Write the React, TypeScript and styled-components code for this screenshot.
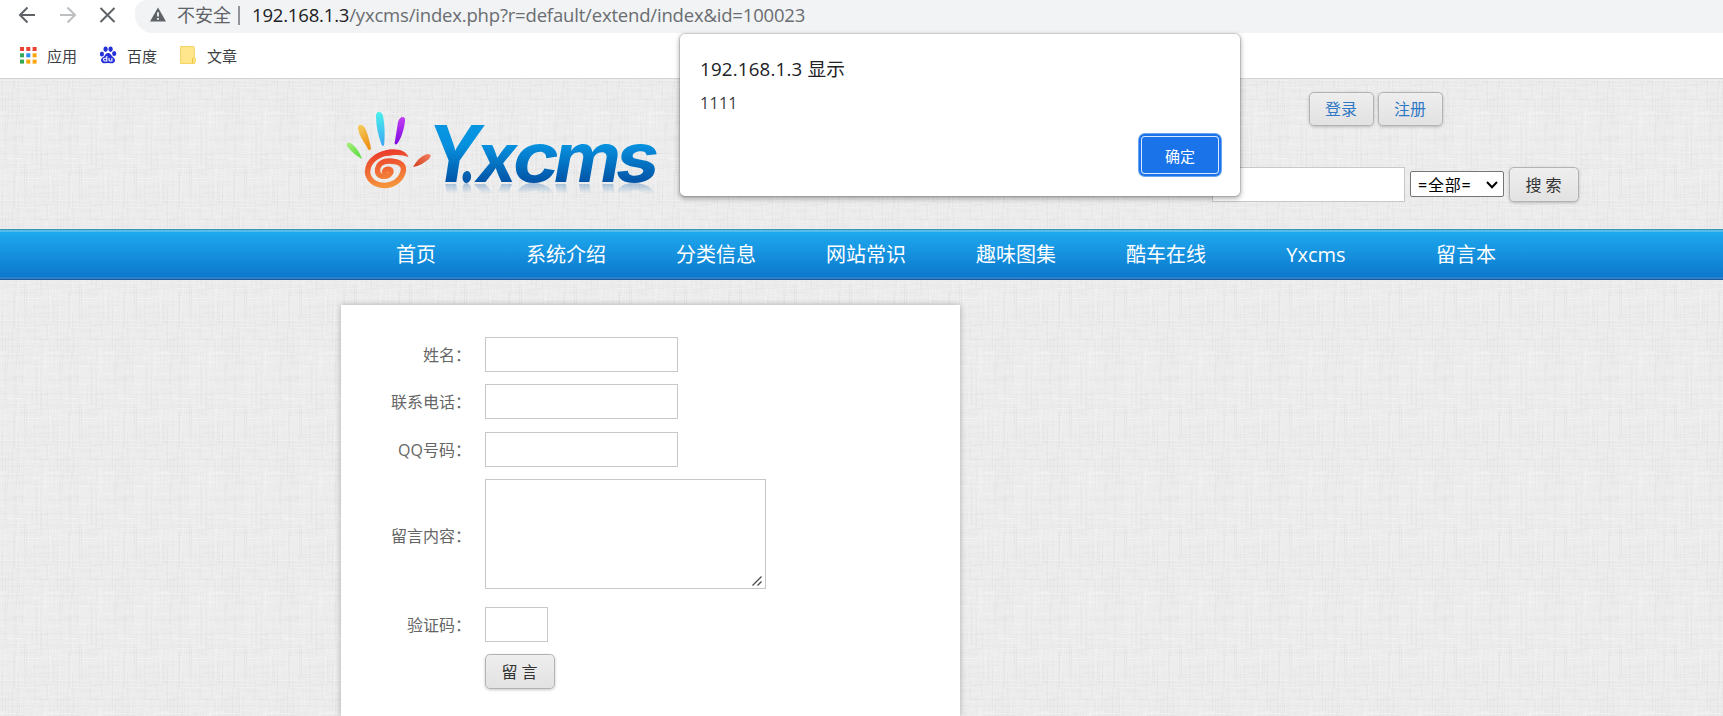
import React from "react";
import styled, { createGlobalStyle } from "styled-components";

const latin = `"Open Sans", "Noto Sans CJK SC", sans-serif`;

const svgUrl = (svg: string) => `url("data:image/svg+xml,${encodeURIComponent(svg).replace(/'/g, "%27")}")`;

/* Linen texture: short faint threads scattered over a 55x120 tile. */
const linenTile = (() => {
  let seed = 41;
  const rand = () => {
    seed = (seed * 16807) % 2147483647;
    return seed / 2147483647;
  };
  const threads: string[] = [];
  const thread = (x: number, y: number, w: number, h: number, tone: string, alpha: number) => {
    const rect = (px: number, py: number) =>
      `<rect x='${px.toFixed(0)}' y='${py.toFixed(0)}' width='${w.toFixed(0)}' height='${h.toFixed(0)}' fill='${tone}' fill-opacity='${alpha.toFixed(3)}'/>`;
    threads.push(rect(x, y));
    if (x + w > 55) threads.push(rect(x - 55, y));
    if (y + h > 120) threads.push(rect(x, y - 120));
  };
  for (let i = 0; i < 170; i++) {
    const light = rand() > 0.5;
    thread(rand() * 55, rand() * 120, 8 + rand() * 26, 1, light ? "white" : "black", light ? 0.08 + rand() * 0.12 : 0.005 + rand() * 0.012);
  }
  for (let i = 0; i < 120; i++) {
    const light = rand() > 0.5;
    thread(rand() * 55, rand() * 120, 1, 12 + rand() * 34, light ? "white" : "black", light ? 0.06 + rand() * 0.1 : 0.005 + rand() * 0.013);
  }
  return svgUrl(
    `<svg xmlns='http://www.w3.org/2000/svg' width='55' height='120'><rect width='55' height='120' fill='rgb(236,236,236)'/>${threads.join("")}</svg>`
  );
})();

const chevron = svgUrl(
  `<svg xmlns='http://www.w3.org/2000/svg' width='12' height='8'><path d='M1 1L6 6.2L11 1' fill='none' stroke='black' stroke-width='2'/></svg>`
);

const resizeGrip = svgUrl(
  `<svg xmlns='http://www.w3.org/2000/svg' width='10' height='10'><path d='M0.5 9.5L9.5 0.5M5.5 9.5L9.5 5.5' fill='none' stroke='rgb(80,80,80)' stroke-width='1.4'/></svg>`
);

const GlobalStyle = createGlobalStyle`
  * { box-sizing: border-box; }
  body { margin: 0; font-family: ${latin}; overflow: hidden; }
  button, input, textarea, select { font-family: inherit; margin: 0; }
`;

const Window = styled.div`
  position: relative;
  display: flex;
  flex-direction: column;
  width: 1723px;
  height: 716px;
  overflow: hidden;
  background: #fff;
`;

const AddressBar = styled.div`
  display: flex;
  height: 33px;
  padding-left: 18px;
`;

const NavIcons = styled.div`
  display: flex;
  align-items: center;
  gap: 22.5px;
  width: 117px;
  height: 30px;
`;

const Omnibox = styled.div`
  display: flex;
  flex: 1;
  align-items: center;
  padding: 0 0 4px 15px;
  background: #f1f3f4;
  border-radius: 12px 0 0 18px;
  color: #5f6368;
  font-size: 18px;
  line-height: 26px;
  white-space: nowrap;
`;

const Security = styled.span`
  margin-left: 11px;
  width: 61px;
`;

const Divider = styled.span`
  width: 2px;
  height: 19px;
  margin: 2px 12px 0 0;
  background: #909499;
`;

const Url = styled.span`
  font-size: 18.5px;
  letter-spacing: -0.18px;
  color: #6a6d71;
`;

const Host = styled.span`
  color: #202124;
`;

const Bookmarks = styled.div`
  display: flex;
  align-items: center;
  height: 46px;
  padding: 0 0 1px 18px;
  border-bottom: 1px solid #d3d4d5;
`;

const Bookmark = styled.div`
  display: flex;
  align-items: center;
  gap: 9px;
  width: 80px;
  color: #3c4043;
  font-size: 15px;
  line-height: 20px;
`;

const BookmarkName = styled.span`
  padding-top: 2px;
`;

const Page = styled.div`
  display: flex;
  flex: 1;
  flex-direction: column;
  background-color: #ebebeb;
  background-image: ${linenTile};
`;

const Header = styled.header`
  display: flex;
  justify-content: space-between;
  height: 150px;
  padding: 13px 144px 0 341px;
`;

const HeaderTools = styled.div`
  display: flex;
  flex-direction: column;
  align-items: flex-start;
  gap: 41px;
`;

const Account = styled.div`
  display: flex;
  gap: 4px;
  margin-left: 97px;
`;

const Search = styled.div`
  display: flex;
  align-items: center;
  gap: 5px;
`;

const GreyButton = styled.button<{ $w: number; $h?: number; $link?: boolean }>`
  width: ${(p) => p.$w}px;
  height: ${(p) => p.$h ?? 35}px;
  padding: 0 1px 0 0;
  border: 1px solid #b2b2b2;
  border-radius: 5px;
  background: linear-gradient(#eee, #e2e2e2);
  box-shadow: 0 1px 3px rgba(0, 0, 0, 0.22), inset 0 0 1px #fff;
  color: ${(p) => (p.$link ? "#2f78c6" : "#333")};
  font-size: 16px;
  line-height: 24px;
`;

const Field = styled.input<{ $w?: number }>`
  width: ${(p) => p.$w ?? 193}px;
  height: 35px;
  border: 1px solid #c8c8c8;
  background: #fff;
`;

const Category = styled.select`
  appearance: none;
  width: 94px;
  height: 26px;
  margin-top: -1px;
  padding: 2px 0 0 7px;
  border: 1px solid #767676;
  border-radius: 2px;
  background: #fff ${chevron} no-repeat 75px 9px;
  color: #000;
  font-size: 16px;
  letter-spacing: 0.8px;
`;

const Menu = styled.nav`
  display: flex;
  height: 51px;
  padding-left: 341px;
  border-top: 1px solid #3e93b8;
  border-bottom: 1px solid #1c5b9d;
  background: linear-gradient(#1fabf0, #0b76cb);
  box-shadow: inset 0 2px #55bce9, inset 0 -2px #2d80c9;
`;

const MenuItem = styled.a`
  width: 150px;
  color: #fff;
  font-size: 20px;
  line-height: 50px;
  text-align: center;
`;

const Card = styled.main`
  display: flex;
  flex: 1;
  flex-direction: column;
  width: 619px;
  margin: 25px 0 0 341px;
  padding-top: 32px;
  background: #fff;
  box-shadow: 0 0 6px rgba(0, 0, 0, 0.28);
`;

const Row = styled.div<{ $gap: number }>`
  display: flex;
  align-items: center;
  margin-bottom: ${(p) => p.$gap}px;
`;

const Label = styled.label<{ $drop?: number }>`
  width: 130px;
  margin-right: 14px;
  padding-top: ${(p) => p.$drop ?? 0}px;
  color: #666;
  font-size: 16px;
  line-height: 22px;
  text-align: right;
`;

const Message = styled.textarea`
  display: block;
  width: 281px;
  height: 110px;
  border: 1px solid #c8c8c8;
  background: #fff ${resizeGrip} no-repeat right 3px bottom 2px;
  resize: none;
`;

const Dialog = styled.div`
  position: absolute;
  top: 34px;
  left: 680px;
  display: flex;
  flex-direction: column;
  width: 560px;
  height: 162px;
  padding: 21px 19px 18px 20px;
  border-radius: 5px;
  background: #fff;
  box-shadow: 0 0 1px 1px rgba(0, 0, 0, 0.14), 0 2px 5px 1px rgba(0, 0, 0, 0.28);
`;

const DialogTitle = styled.div`
  color: #202124;
  font-size: 18.7px;
  letter-spacing: 0.2px;
  line-height: 27px;
`;

const DialogText = styled.div`
  margin-top: 9px;
  color: #3c4043;
  font-size: 16px;
  letter-spacing: 0.3px;
  line-height: 24px;
`;

const Confirm = styled.button`
  align-self: flex-end;
  width: 76px;
  height: 36px;
  margin: 22px 3px 0 0;
  padding: 0;
  border: 0;
  border-radius: 3px;
  background: #1a73e8;
  box-shadow: 0 0 0 1px #d6e6fc, 0 0 0 3px #1a73e8, 0 0 0 4px #6ba5f1;
  color: #fff;
  font-size: 15px;
`;

const LogoBox = styled.div`
  display: flex;
  align-items: flex-start;
  padding-top: 3px;
`;

const Hand = styled.svg`
  display: block;
  width: 90px;
  height: 100px;
`;

const Wordmark = styled.svg`
  display: block;
  width: 230px;
  height: 88px;
  -webkit-box-reflect: below 0 linear-gradient(transparent 88%, rgba(0, 0, 0, 0.3));
`;

const letters = [
  { ch: "Y", x: -4, w: 54, size: 78 },
  { ch: ".", x: 29, w: 17, size: 72 },
  { ch: "x", x: 45, w: 41, size: 68 },
  { ch: "c", x: 82, w: 46, size: 68 },
  { ch: "m", x: 123, w: 67, size: 68 },
  { ch: "s", x: 185, w: 43, size: 68 },
];

const Logo = () => (
  <LogoBox>
    <Hand viewBox="0 0 90 100">
      <defs>
        <linearGradient id="swirl" gradientUnits="userSpaceOnUse" x1="44" y1="55" x2="50" y2="93">
          <stop offset="0" stopColor="#ea3a2a" />
          <stop offset="1" stopColor="#f79a3e" />
        </linearGradient>
        <linearGradient id="green" x1="0" y1="0" x2="1" y2="1">
          <stop offset="0" stopColor="#a8ee7c" />
          <stop offset="1" stopColor="#4fd935" />
        </linearGradient>
        <linearGradient id="amber" x1="0" y1="0" x2="0.4" y2="1">
          <stop offset="0" stopColor="#f4d163" />
          <stop offset="1" stopColor="#ee9316" />
        </linearGradient>
        <linearGradient id="cyan" x1="0" y1="0" x2="0" y2="1">
          <stop offset="0" stopColor="#4cf0ec" />
          <stop offset="1" stopColor="#39a5f3" />
        </linearGradient>
        <linearGradient id="violet" x1="0" y1="0" x2="0" y2="1">
          <stop offset="0" stopColor="#c33df4" />
          <stop offset="1" stopColor="#7c08df" />
        </linearGradient>
        <linearGradient id="thumb" x1="1" y1="0" x2="0" y2="1">
          <stop offset="0" stopColor="#f58062" />
          <stop offset="1" stopColor="#cf3d18" />
        </linearGradient>
      </defs>
      <path fill="url(#green)" d="M6 51C5 47 8 47 11 49C16 53 19 58 21 64C16 61 9 56 6 51Z" />
      <path fill="url(#amber)" d="M17 34C16 29 21 28 24 33C27 39 29 48 30 54C28 56 27 55 26 52C22 46 18 40 17 34Z" />
      <path fill="url(#cyan)" d="M35 22C34 16 41 15 42 21C44 31 44 43 43 50C42 52 41 51 40 48C37 39 35 31 35 22Z" />
      <path fill="url(#violet)" d="M57 27C59 20 65 21 64 26C63 35 60 44 56 49C54 50 53 49 54 46Z" />
      <path fill="url(#thumb)" d="M72 72C76 65 81 60 87 59C91 60 90 61 88 64C83 68 78 71 72 72Z" />
      <path
        fill="none"
        stroke="url(#swirl)"
        strokeWidth="5.4"
        strokeLinecap="round"
        d="M43.5 76.5C45 73.5 50 73.5 50 77C49 82 37 84 36.5 76C36.5 69 42 66 48 66C57 66 63 69 62.5 75C61 85 52 90.5 43 90.5C33 90 27 84 26.5 77C27 64 40 58 50 57.5"
      />
      <path fill="url(#swirl)" d="M44 55.5C54 52.5 65 55 67.5 62C62 60 56 59 46 61Z" />
    </Hand>
    <Wordmark viewBox="0 0 230 88">
      <defs>
        <linearGradient id="word" gradientUnits="userSpaceOnUse" x1="0" y1="30" x2="0" y2="87">
          <stop offset="0" stopColor="#0795e2" />
          <stop offset="0.35" stopColor="#0691df" />
          <stop offset="1" stopColor="#0254a6" />
        </linearGradient>
      </defs>
      <text y="87" fill="url(#word)" fontFamily="Inter" fontWeight="bold" fontStyle="italic">
        {letters.map((l) => (
          <tspan key={l.ch} x={l.x} fontSize={l.size} textLength={l.w} lengthAdjust="spacingAndGlyphs">
            {l.ch}
          </tspan>
        ))}
      </text>
    </Wordmark>
  </LogoBox>
);

const Back = () => (
  <svg width="18" height="18" viewBox="0 0 18 18" fill="none" stroke="#5f6368" strokeWidth="2">
    <path d="M17 9H2.5M9.5 1.5L2 9L9.5 16.5" />
  </svg>
);

const Forward = () => (
  <svg width="18" height="18" viewBox="0 0 18 18" fill="none" stroke="#bdc0c3" strokeWidth="2">
    <path d="M1 9H15.5M8.5 1.5L16 9L8.5 16.5" />
  </svg>
);

const Stop = () => (
  <svg width="18" height="18" viewBox="0 0 18 18" fill="none" stroke="#5f6368" strokeWidth="2">
    <path d="M1.5 2L15.5 16M15.5 2L1.5 16" />
  </svg>
);

const Warning = () => (
  <svg width="16" height="15" viewBox="0 0 16 15">
    <path fill="#5f6368" d="M8 0.5L16 14.5H0Z" />
    <path stroke="#f1f3f4" strokeWidth="1.8" d="M8 5.2V9.6M8 11V12.8" />
  </svg>
);

const appColors = ["#ea4335", "#ea4335", "#ea4335", "#34a853", "#2f8cf0", "#fba50a", "#34a853", "#fba50a", "#fba50a"];

const Apps = () => (
  <svg width="20" height="18" viewBox="0 0 20 18">
    {appColors.map((c, i) => (
      <rect key={i} x={2 + (i % 3) * 6.3} y={1 + Math.floor(i / 3) * 6.3} width="4" height="4" fill={c} />
    ))}
  </svg>
);

const Paw = () => (
  <svg width="20" height="18" viewBox="0 0 20 18" fill="#2630d9">
    <ellipse cx="3.9" cy="8" rx="2.1" ry="2.5" />
    <ellipse cx="7.6" cy="3.2" rx="2.1" ry="2.7" />
    <ellipse cx="12.6" cy="3.2" rx="2.1" ry="2.7" />
    <ellipse cx="16.2" cy="7.6" rx="2.1" ry="2.5" />
    <path d="M10 7C7 7 7.5 10 4.5 11.5C1.5 14 3.4 17.5 7 17.3Q10 16.8 13 17.3C17 17.6 18.4 14 15.5 11.5C13 9.5 13 7 10 7Z" />
    <path
      d="M8.8 10V15H7Q5.6 15 5.6 13.5T7.2 12.2H8.8M11 12V13.7Q11 15 12.4 15H13.9V12"
      fill="none"
      stroke="#fff"
      strokeWidth="1.1"
    />
  </svg>
);

const Folder = () => (
  <svg width="20" height="18" viewBox="0 0 20 18">
    <path d="M2.5 0.5H15Q16.3 0.5 16.3 1.8V11.5L17.3 12.5V16Q17.3 17.5 16 17.5H2.5Z" fill="#ffe58c" stroke="#f5d463" />
    <path d="M14.5 17V13Q14.5 12 15.5 12H16.5" fill="none" stroke="#edc53f" />
  </svg>
);

const menu = ["首页", "系统介绍", "分类信息", "网站常识", "趣味图集", "酷车在线", "Yxcms", "留言本"];

export default function App() {
  return (
    <Window>
      <GlobalStyle />
      <AddressBar>
        <NavIcons>
          <Back />
          <Forward />
          <Stop />
        </NavIcons>
        <Omnibox>
          <Warning />
          <Security>不安全</Security>
          <Divider />
          <Url>
            <Host>192.168.1.3</Host>/yxcms/index.php?r=default/extend/index&amp;id=100023
          </Url>
        </Omnibox>
      </AddressBar>
      <Bookmarks>
        <Bookmark><Apps /><BookmarkName>应用</BookmarkName></Bookmark>
        <Bookmark><Paw /><BookmarkName>百度</BookmarkName></Bookmark>
        <Bookmark><Folder /><BookmarkName>文章</BookmarkName></Bookmark>
      </Bookmarks>
      <Page>
        <Header>
          <Logo />
          <HeaderTools>
            <Account>
              <GreyButton $w={65} $h={34} $link>登录</GreyButton>
              <GreyButton $w={65} $h={34} $link>注册</GreyButton>
            </Account>
            <Search>
              <Field />
              <Category>
                <option>=全部=</option>
              </Category>
              <GreyButton $w={70}>搜 索</GreyButton>
            </Search>
          </HeaderTools>
        </Header>
        <Menu>
          {menu.map((m) => (
            <MenuItem key={m}>{m}</MenuItem>
          ))}
        </Menu>
        <Card>
          <Row $gap={12}><Label>姓名：</Label><Field /></Row>
          <Row $gap={13}><Label>联系电话：</Label><Field /></Row>
          <Row $gap={12}><Label>QQ号码：</Label><Field /></Row>
          <Row $gap={18}><Label $drop={4}>留言内容：</Label><Message /></Row>
          <Row $gap={12}><Label>验证码：</Label><Field $w={63} /></Row>
          <Row $gap={0}><Label /><GreyButton $w={70}>留 言</GreyButton></Row>
        </Card>
      </Page>
      <Dialog>
        <DialogTitle>192.168.1.3 显示</DialogTitle>
        <DialogText>1111</DialogText>
        <Confirm>确定</Confirm>
      </Dialog>
    </Window>
  );
}
